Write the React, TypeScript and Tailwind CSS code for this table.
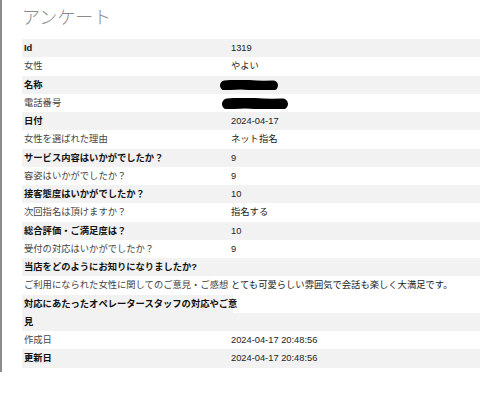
import React from 'react';

type Row = { label: string; value?: React.ReactNode; strong: boolean };

const Scribble = ({ w, h }: { w: number; h: number }) => (
  <svg width={w} height={h} viewBox={`0 0 ${w} ${h}`} className="block">
    <path
      d={`M${h / 2} ${h / 2 + 0.5} Q ${w / 3} ${h / 2 - 1} ${w / 2} ${h / 2} T ${w - h / 2} ${h / 2 + 0.5}`}
      stroke="#000"
      strokeWidth={h}
      strokeLinecap="round"
      fill="none"
    />
  </svg>
);

const rows: Row[] = [
  { label: 'Id', value: '1319', strong: true },
  { label: '女性', value: 'やよい', strong: false },
  {
    label: '名称',
    value: (
      <div className="-ml-[11px]">
        <Scribble w={58} h={10} />
      </div>
    ),
    strong: true,
  },
  {
    label: '電話番号',
    value: (
      <div className="-ml-[9px] mt-[2px]">
        <Scribble w={66} h={11} />
      </div>
    ),
    strong: false,
  },
  { label: '日付', value: '2024-04-17', strong: true },
  { label: '女性を選ばれた理由', value: 'ネット指名', strong: false },
  { label: 'サービス内容はいかがでしたか？', value: '9', strong: true },
  { label: '容姿はいかがでしたか？', value: '9', strong: false },
  { label: '接客態度はいかがでしたか？', value: '10', strong: true },
  { label: '次回指名は頂けますか？', value: '指名する', strong: false },
  { label: '総合評価・ご満足度は？', value: '10', strong: true },
  { label: '受付の対応はいかがでしたか？', value: '9', strong: false },
  { label: '当店をどのようにお知りになりましたか?', value: '', strong: true },
  {
    label: 'ご利用になられた女性に関してのご意見・ご感想',
    value: 'とても可愛らしい雰囲気で会話も楽しく大満足です。',
    strong: false,
  },
];

function TableRow({ row }: { row: Row }) {
  return (
    <div className={`flex h-[18.25px] items-center ${row.strong ? 'bg-[#f2f2f2]' : 'bg-white'}`}>
      <div
        className={`w-[209px] shrink-0 whitespace-nowrap pl-[2px] ${
          row.strong ? 'font-bold text-[#111]' : 'text-[#444]'
        }`}
      >
        {row.label}
      </div>
      <div className="flex-1 whitespace-nowrap text-[#222]">{row.value}</div>
    </div>
  );
}

export default function App() {
  return (
    <div
      className="w-[480px] h-[395px] bg-white overflow-hidden"
      style={{ fontFamily: '"Liberation Sans", "Noto Sans CJK JP", sans-serif' }}
    >
      <div className="h-[372px] border-l-[2px] border-[#8c8c8c] pl-[20px]">
        <h1 className="pt-[6px] h-[39px] text-[18px] font-light leading-[24px] text-[#8a8a8a]">
          アンケート
        </h1>
        <div className="text-[9.3px] leading-[18.25px]">
          {rows.map((r) => (
            <TableRow key={r.label} row={r} />
          ))}
          <div className="flex h-[18.25px] items-center">
            <div className="w-[211px] shrink-0 whitespace-nowrap bg-[#f2f2f2] pl-[2px] font-bold text-[#111]">
              対応にあたったオペレータースタッフの対応やご意
            </div>
            <div className="flex-1 bg-white" />
          </div>
          <div className="h-[18.25px] bg-[#f2f2f2] pl-[2px] font-bold text-[#111]">見</div>
          <TableRow row={{ label: '作成日', value: '2024-04-17 20:48:56', strong: false }} />
          <TableRow row={{ label: '更新日', value: '2024-04-17 20:48:56', strong: true }} />
        </div>
      </div>
    </div>
  );
}
